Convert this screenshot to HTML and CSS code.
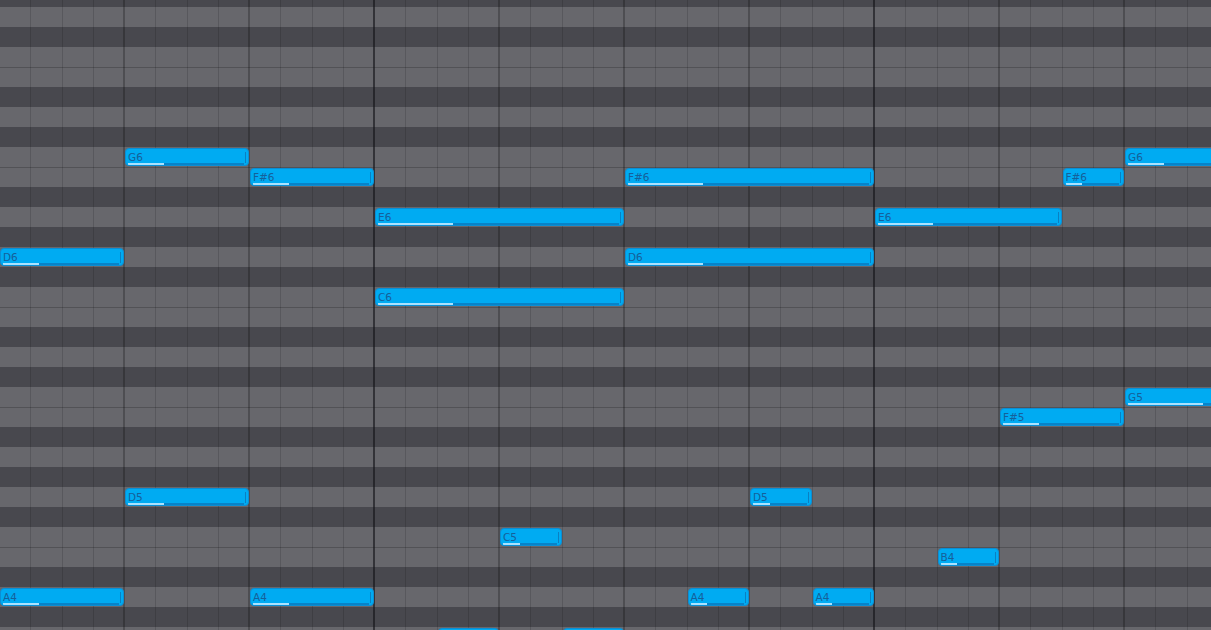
FILE: index.html
```html
<!DOCTYPE html>
<html lang="en">
<head>
<meta charset="utf-8">
<title>Piano roll</title>
<link rel="stylesheet" href="styles.css">
</head>
<body>
<div class="roll">
  <div class="rows">
    <div class="row off"></div>
    <div class="row on"></div>
    <div class="row off"></div>
    <div class="row on"></div>
    <div class="row on edge"></div>
    <div class="row off"></div>
    <div class="row on"></div>
    <div class="row off"></div>
    <div class="row on"></div>
    <div class="row on edge"></div>
    <div class="row off"></div>
    <div class="row on"></div>
    <div class="row off"></div>
    <div class="row on"></div>
    <div class="row off"></div>
    <div class="row on"></div>
    <div class="row on edge"></div>
    <div class="row off"></div>
    <div class="row on"></div>
    <div class="row off"></div>
    <div class="row on"></div>
    <div class="row on edge"></div>
    <div class="row off"></div>
    <div class="row on"></div>
    <div class="row off"></div>
    <div class="row on"></div>
    <div class="row off"></div>
    <div class="row on"></div>
    <div class="row on edge"></div>
    <div class="row off"></div>
    <div class="row on"></div>
    <div class="row off"></div>
    <div class="row on"></div>
  </div>
  <div class="grid"></div>
  <div class="notes">
    <div class="note" style="left:0px;top:248px;width:124px"><span class="label">D6</span><span class="vel"></span><span class="handle"></span></div>
    <div class="note" style="left:0px;top:588px;width:124px"><span class="label">A4</span><span class="vel"></span><span class="handle"></span></div>
    <div class="note" style="left:125px;top:148px;width:124px"><span class="label">G6</span><span class="vel"></span><span class="handle"></span></div>
    <div class="note" style="left:125px;top:488px;width:124px"><span class="label">D5</span><span class="vel"></span><span class="handle"></span></div>
    <div class="note" style="left:250px;top:168px;width:124px"><span class="label">F#6</span><span class="vel"></span><span class="handle"></span></div>
    <div class="note" style="left:250px;top:588px;width:124px"><span class="label">A4</span><span class="vel"></span><span class="handle"></span></div>
    <div class="note" style="left:375px;top:208px;width:249px"><span class="label">E6</span><span class="vel"></span><span class="handle"></span></div>
    <div class="note" style="left:375px;top:288px;width:249px"><span class="label">C6</span><span class="vel"></span><span class="handle"></span></div>
    <div class="note" style="left:500px;top:528px;width:61.5px"><span class="label">C5</span><span class="vel"></span><span class="handle"></span></div>
    <div class="note" style="left:437.5px;top:628px;width:61.5px"></div>
    <div class="note" style="left:562.5px;top:628px;width:61.5px"></div>
    <div class="note" style="left:625px;top:168px;width:249px"><span class="label">F#6</span><span class="vel"></span><span class="handle"></span></div>
    <div class="note" style="left:625px;top:248px;width:249px"><span class="label">D6</span><span class="vel"></span><span class="handle"></span></div>
    <div class="note" style="left:687.5px;top:588px;width:61.5px"><span class="label">A4</span><span class="vel"></span><span class="handle"></span></div>
    <div class="note" style="left:750px;top:488px;width:61.5px"><span class="label">D5</span><span class="vel"></span><span class="handle"></span></div>
    <div class="note" style="left:812.5px;top:588px;width:61.5px"><span class="label">A4</span><span class="vel"></span><span class="handle"></span></div>
    <div class="note" style="left:875px;top:208px;width:186.5px"><span class="label">E6</span><span class="vel"></span><span class="handle"></span></div>
    <div class="note" style="left:937.5px;top:548px;width:61.5px"><span class="label">B4</span><span class="vel"></span><span class="handle"></span></div>
    <div class="note" style="left:1000px;top:408px;width:124px"><span class="label">F#5</span><span class="vel"></span><span class="handle"></span></div>
    <div class="note" style="left:1062.5px;top:168px;width:61.5px"><span class="label">F#6</span><span class="vel"></span><span class="handle"></span></div>
    <div class="note" style="left:1125px;top:148px;width:124px"><span class="label">G6</span><span class="vel"></span><span class="handle"></span></div>
    <div class="note" style="left:1125px;top:388px;width:249px"><span class="label">G5</span><span class="vel"></span><span class="handle"></span></div>
  </div>
</div>
</body>
</html>
```

FILE: styles.css
```css
* { box-sizing: border-box; }
html, body {
  margin: 0;
  padding: 0;
  width: 1211px;
  height: 630px;
  overflow: hidden;
  background: #47474d;
}
.roll {
  position: relative;
  width: 1211px;
  height: 630px;
  overflow: hidden;
}
.rows {
  display: flex;
  flex-direction: column;
  margin-top: -13px;
}
.row {
  height: 20px;
  flex: none;
}
.row.on { background: #67676c; }
.row.off { background: #48484e; }
.row.edge { box-shadow: inset 0 1px 0 rgba(0, 0, 0, 0.2); }

.grid {
  position: absolute;
  inset: 0;
  pointer-events: none;
  background-image:
    linear-gradient(to right, rgba(24, 24, 30, 0.5) 0 2px, transparent 2px),
    linear-gradient(to right,
      transparent 0 30.5px, rgba(0, 0, 0, 0.14) 30.5px 31.5px,
      transparent 31.5px 61.8px, rgba(0, 0, 0, 0.14) 61.8px 62.8px,
      transparent 62.8px 93px, rgba(0, 0, 0, 0.14) 93px 94px,
      transparent 94px 123.5px, rgba(0, 0, 0, 0.24) 123.5px 125px);
  background-size: 500px 100%, 125px 100%;
  background-position: 373px 0, 0 0;
  background-repeat: repeat-x, repeat-x;
}

.notes {
  position: absolute;
  inset: 0;
}
.note {
  position: absolute;
  height: 18px;
  border-radius: 4px;
  background: #00abf2;
  border: 1px solid #0a8ed4;
  overflow: hidden;
}
.label {
  position: absolute;
  left: 2px;
  top: 2px;
  font-family: "DejaVu Sans", "Liberation Sans", sans-serif;
  font-size: 10.5px;
  line-height: 12px;
  color: #15609a;
}
.vel {
  position: absolute;
  left: 2px;
  right: 4px;
  top: 14px;
  height: 2px;
  background: #0883c8;
}
.vel::before {
  content: "";
  position: absolute;
  left: 0;
  top: 0;
  bottom: 0;
  width: 31%;
  background: #a9e2ff;
}
.handle {
  position: absolute;
  right: 2px;
  top: 3px;
  width: 1px;
  height: 11px;
  background: #0a7fc2;
}
```
